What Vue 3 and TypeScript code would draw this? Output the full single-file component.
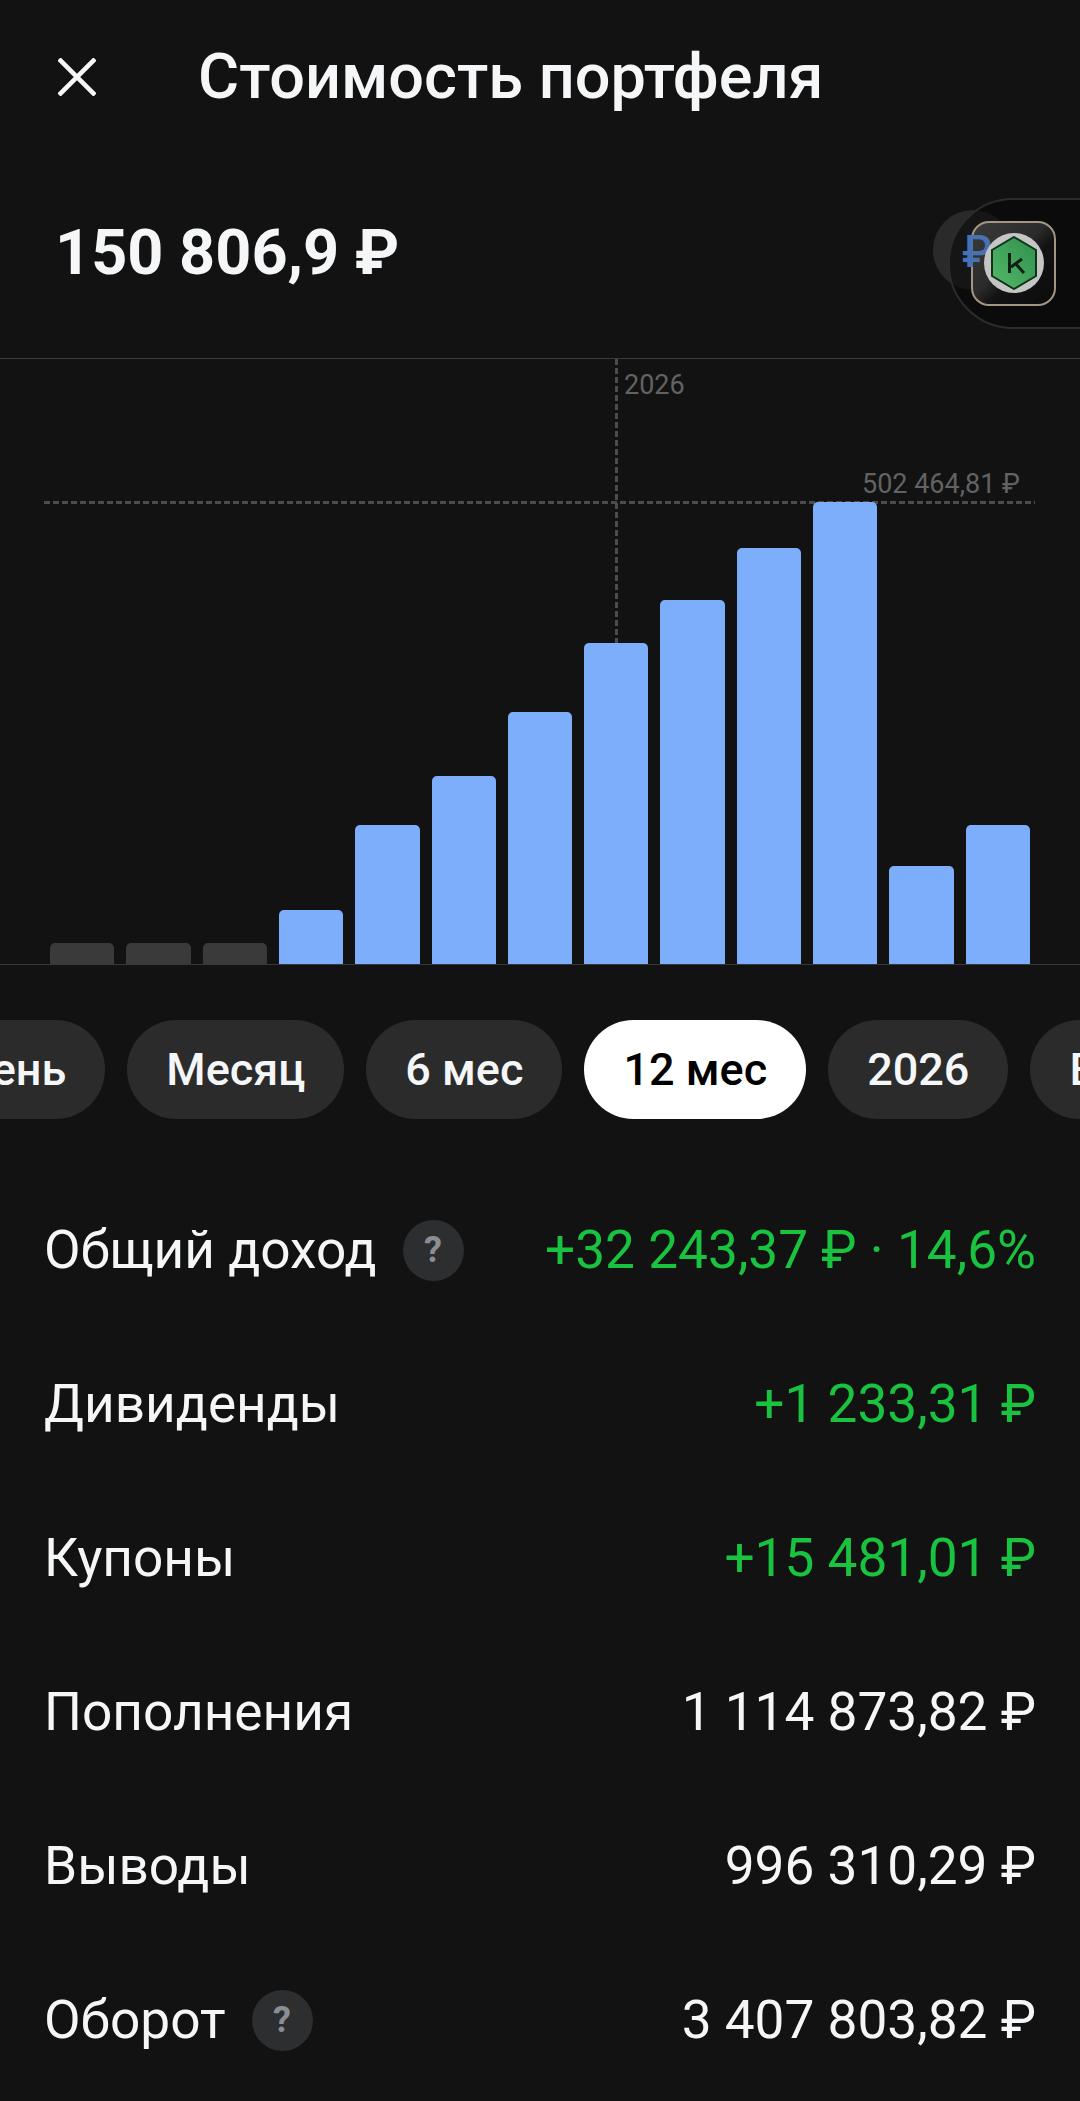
<script setup lang="ts">
interface Row {
  label: string
  value: string
  positive?: boolean
  hint?: boolean
}

const bars = [21, 21, 21, 54, 139, 188, 252, 321, 364, 416, 462, 98, 139]
const periods = ['День', 'Месяц', '6 мес', '12 мес', '2026', 'Все']
const activePeriod = '12 мес'

const rows: Row[] = [
  { label: 'Общий доход', value: '+32 243,37 ₽ · 14,6%', positive: true, hint: true },
  { label: 'Дивиденды', value: '+1 233,31 ₽', positive: true },
  { label: 'Купоны', value: '+15 481,01 ₽', positive: true },
  { label: 'Пополнения', value: '1 114 873,82 ₽' },
  { label: 'Выводы', value: '996 310,29 ₽' },
  { label: 'Оборот', value: '3 407 803,82 ₽', hint: true }
]
</script>

<template>
  <div class="page">
    <header class="top">
      <svg class="close" width="38" height="38" viewBox="0 0 38 38" fill="none" stroke="#f5f6f7" stroke-width="4.6">
        <path d="M1 1 L37 37 M37 1 L1 37" />
      </svg>
      <h1>Стоимость портфеля</h1>
    </header>

    <section class="total">
      <div class="amount">150 806,9 ₽</div>
      <div class="currency"></div>
      <div class="capsule">
        <div class="app-icon">
          <span class="currency-sign">₽</span>
          <div class="app-disc">
            <svg width="46" height="54" viewBox="0 0 46 54">
              <defs>
                <linearGradient id="hex" x1="0" y1="1" x2="1" y2="0">
                  <stop offset="0" stop-color="#55b96a" />
                  <stop offset="1" stop-color="#2f8f4c" />
                </linearGradient>
              </defs>
              <path d="M23 1 L45 14 V40 L23 53 L1 40 V14 Z" fill="url(#hex)" stroke="#12321c" stroke-width="2" />
              <path d="M18.5 17 V37 M20 31 L31 23 M24.5 27.5 L33 37" fill="none" stroke="#0e1f14" stroke-width="3" />
            </svg>
          </div>
        </div>
      </div>
    </section>

    <section class="chart">
      <div class="v-line"></div>
      <div class="h-line"></div>
      <span class="year">2026</span>
      <span class="max">502 464,81 ₽</span>
      <div class="bars">
        <div
          v-for="(h, i) in bars"
          :key="i"
          class="bar"
          :class="{ empty: i < 3 }"
          :style="{ height: h + 'px' }"
        ></div>
      </div>
    </section>

    <nav class="periods">
      <div v-for="p in periods" :key="p" class="pill" :class="{ active: p === activePeriod }">{{ p }}</div>
    </nav>

    <section class="rows">
      <div v-for="row in rows" :key="row.label" class="row">
        <div class="label">
          {{ row.label }}
          <span v-if="row.hint" class="hint">?</span>
        </div>
        <div class="value" :class="{ positive: row.positive }">{{ row.value }}</div>
      </div>
    </section>
  </div>
</template>

<style>
html,
body {
  margin: 0;
  background: #121212;
}
</style>

<style scoped>
.page {
  width: 1080px;
  height: 2101px;
  overflow: hidden;
  background: #121212;
  color: #f5f6f7;
  font-family: Roboto, 'Noto Sans', sans-serif;
}

.top {
  height: 154px;
  display: flex;
  align-items: center;
  padding-left: 58px;
  box-sizing: border-box;
}

.close {
  flex: none;
}

.top h1 {
  margin: -2px 0 0 102px;
  font-size: 63px;
  font-weight: 500;
}

.total {
  position: relative;
  height: 204px;
  display: flex;
  align-items: center;
  padding-left: 55px;
  padding-bottom: 8px;
  box-sizing: border-box;
}

.amount {
  font-size: 63px;
  font-weight: 700;
}

.currency {
  position: absolute;
  left: 933px;
  top: 56px;
  width: 80px;
  height: 80px;
  border-radius: 50%;
  background: #2a2a2b;
}

.currency-sign {
  position: absolute;
  left: -11px;
  top: 3px;
  font-size: 44px;
  line-height: 52px;
  font-weight: 500;
  color: #4871b4;
}

.capsule {
  position: absolute;
  left: 948px;
  top: 44px;
  width: 200px;
  height: 131px;
  box-sizing: border-box;
  border: 2px solid #2b2c2d;
  border-radius: 65px;
  background: rgba(8, 8, 8, 0.62);
}

.app-icon {
  position: absolute;
  left: 21px;
  top: 21px;
  width: 85px;
  height: 85px;
  box-sizing: border-box;
  border: 2px solid #a39583;
  border-radius: 18px;
  background: linear-gradient(135deg, #3a3a3a 0%, #2b2b2b 45%, #121212 60%, #0c0c0c 100%);
}

.app-disc {
  position: absolute;
  left: 11px;
  top: 10px;
  width: 60px;
  height: 60px;
  border-radius: 50%;
  background: #c4c6c4;
  display: flex;
  align-items: center;
  justify-content: center;
}

.chart {
  position: relative;
  height: 607px;
  box-sizing: border-box;
  border-top: 1px solid #38393a;
  border-bottom: 1px solid #38393a;
}

.bars {
  position: absolute;
  left: 50px;
  right: 50px;
  bottom: 0;
  display: grid;
  grid-template-columns: repeat(13, 1fr);
  column-gap: 12px;
  align-items: end;
}

.bar {
  background: #7daefb;
  border-radius: 5px 5px 0 0;
}

.bar.empty {
  background: #3a3a3b;
}

.v-line {
  position: absolute;
  left: 615px;
  top: 0;
  width: 3px;
  height: 285px;
  background: repeating-linear-gradient(180deg, #4c4c4d 0 6px, transparent 6px 9px);
}

.h-line {
  position: absolute;
  left: 44px;
  right: 45px;
  top: 142px;
  height: 3px;
  background: repeating-linear-gradient(90deg, #4c4c4d 0 6px, transparent 6px 9px);
}

.year,
.max {
  position: absolute;
  font-size: 27px;
  color: #626263;
}

.year {
  left: 624px;
  top: 10px;
}

.max {
  right: 60px;
  top: 109px;
}

.periods {
  display: flex;
  gap: 22px;
  margin-top: 55px;
  margin-left: -81px;
  width: 1200px;
}

.pill {
  flex: none;
  height: 99px;
  padding: 0 39px;
  border-radius: 50px;
  background: #2b2b2c;
  display: flex;
  align-items: center;
  font-size: 45px;
  font-weight: 500;
}

.pill.active {
  background: #fff;
  color: #000;
}

.rows {
  margin-top: 54px;
  padding: 0 44px;
}

.row {
  height: 154px;
  display: flex;
  align-items: center;
  justify-content: space-between;
  font-size: 53.2px;
}

.label {
  display: flex;
  align-items: center;
  gap: 26px;
}

.hint {
  width: 61px;
  height: 61px;
  border-radius: 50%;
  background: #2d2e30;
  color: #8b8d94;
  font-size: 36px;
  font-weight: 700;
  display: flex;
  align-items: center;
  justify-content: center;
}

.value.positive {
  color: #1ac33f;
}
</style>
